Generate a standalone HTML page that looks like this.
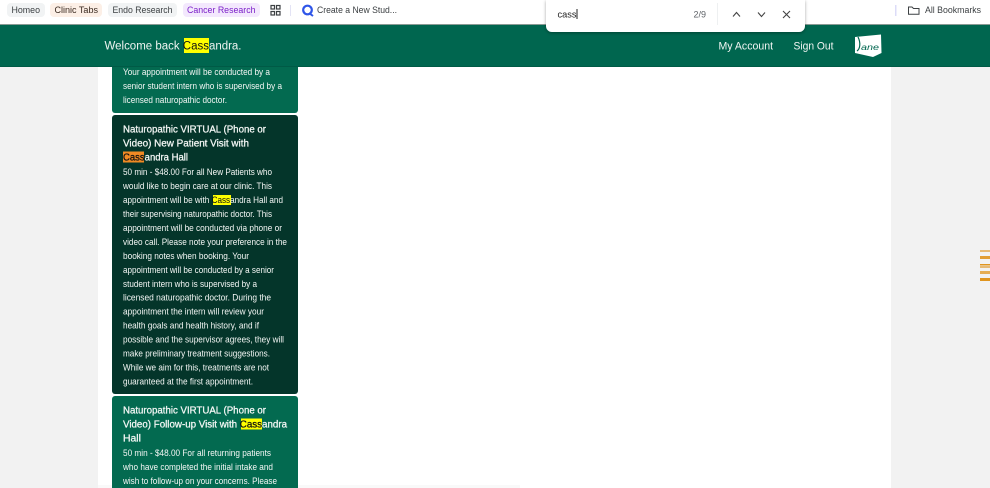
<!DOCTYPE html>
<html><head><meta charset="utf-8"><style>
html,body{margin:0;padding:0;width:990px;height:488px;overflow:hidden;background:#f2f2f2}
svg{display:block;font-family:"Liberation Sans",sans-serif}
.b text{font-size:9.2px;fill:#f4f7f5}
.t text{font-size:10.4px;fill:#f4f7f5;stroke:#f4f7f5;stroke-width:.28px}
.t tspan.k{fill:#111;stroke:#111}
.c text{font-size:9px;fill:#3c4043}
</style></head><body>
<svg width="990" height="488" viewBox="0 0 990 488" xmlns="http://www.w3.org/2000/svg">
<rect width="990" height="488" fill="#f2f2f2"/>
<rect x="98" y="67" width="793" height="421" fill="#fff"/>
<rect x="0" y="0" width="990" height="25" fill="#fff"/>
<rect x="0" y="24" width="990" height="1" fill="#8a9a94"/>
<rect x="0" y="25" width="990" height="42" fill="#00664f"/>
<rect x="0" y="66" width="990" height="1" fill="#005a46"/>

<!-- bookmarks -->
<rect x="7" y="3" width="38" height="14" rx="4" fill="#f1f3f4"/>
<rect x="50" y="3" width="52" height="14" rx="4" fill="#fcefe6"/>
<rect x="108" y="3" width="69" height="14" rx="4" fill="#f1f3f4"/>
<rect x="183" y="3" width="77" height="14" rx="4" fill="#f3e8fd"/>
<g class="c">
<text x="11.500" y="13" textLength="28.500" lengthAdjust="spacingAndGlyphs">Homeo</text>
<text x="54.500" y="13" textLength="43.500" lengthAdjust="spacingAndGlyphs" style="fill:#3a2a20">Clinic Tabs</text>
<text x="112.500" y="13" textLength="60" lengthAdjust="spacingAndGlyphs">Endo Research</text>
<text x="187" y="13" textLength="68.500" lengthAdjust="spacingAndGlyphs" style="fill:#7b1fc8">Cancer Research</text>
<text x="317" y="13" textLength="80" lengthAdjust="spacingAndGlyphs">Create a New Stud...</text>
<text x="925" y="13" textLength="56" lengthAdjust="spacingAndGlyphs">All Bookmarks</text>
</g>
<g fill="none" stroke="#3c4043" stroke-width="1.200">
<rect x="271" y="5.500" width="3.500" height="3.500"/><rect x="276.500" y="5.500" width="3.500" height="3.500"/>
<rect x="271" y="11.500" width="3.500" height="3.500"/><rect x="276.500" y="11.500" width="3.500" height="3.500"/>
</g>
<rect x="290" y="5" width="1" height="11" fill="#e3e3f5"/>
<circle cx="307.500" cy="10" r="4.300" fill="none" stroke="#2f56e8" stroke-width="2.200"/>
<path d="M309 13 L313 16" stroke="#2f56e8" stroke-width="2"/>
<rect x="895" y="5" width="1.500" height="11" fill="#dcdcf8"/>
<path d="M908.500 7 h3.500 l1.500 1.500 h5.500 v5.800 h-10.500 z" fill="none" stroke="#3c4043" stroke-width="1"/>

<!-- header -->
<rect x="184" y="38" width="25" height="15" fill="#ffff00"/>
<text x="104.500" y="49.500" font-size="11.500" fill="#eef4f1" textLength="137" lengthAdjust="spacingAndGlyphs">Welcome back <tspan fill="#111">Cass</tspan>andra.</text>
<text x="718.500" y="49.500" font-size="10.800" fill="#f2f6f4" textLength="54.500" lengthAdjust="spacingAndGlyphs">My Account</text>
<text x="793.500" y="49.500" font-size="10.800" fill="#f2f6f4" textLength="40" lengthAdjust="spacingAndGlyphs">Sign Out</text>
<path d="M855 37 L881 34.500 L881.500 53 L873 57 L855 53 Z" fill="#fff"/>
<path d="M858 37 C861 43 860 49 857 51" fill="none" stroke="#00664f" stroke-width="1.200"/>
<text x="861" y="50" font-size="8" font-style="italic" fill="#00664f" textLength="18" lengthAdjust="spacingAndGlyphs">ane</text>

<!-- card 0 -->
<path d="M112 67 H298 V110 a3 3 0 0 1 -3 3 H115 a3 3 0 0 1 -3 -3 Z" fill="#036a50"/>
<g class="b">
<text x="123" y="75" textLength="147" lengthAdjust="spacingAndGlyphs">Your appointment will be conducted by a</text>
<text x="123" y="89" textLength="159" lengthAdjust="spacingAndGlyphs">senior student intern who is supervised by a</text>
<text x="123" y="103" textLength="104" lengthAdjust="spacingAndGlyphs">licensed naturopathic doctor.</text>
</g>

<!-- card 1 dark -->
<rect x="112" y="115" width="186" height="279" rx="3" fill="#04352a"/>
<rect x="123" y="151.500" width="21" height="11" fill="#f08a24"/>
<rect x="213" y="195" width="18" height="10" fill="#ffff00"/>
<g class="t">
<text x="123" y="132.500" textLength="143" lengthAdjust="spacingAndGlyphs">Naturopathic VIRTUAL (Phone or</text>
<text x="123" y="146.500" textLength="126" lengthAdjust="spacingAndGlyphs">Video) New Patient Visit with</text>
<text x="123" y="160.500" textLength="65" lengthAdjust="spacingAndGlyphs"><tspan class="k">Cass</tspan>andra Hall</text>
</g>
<g class="b">
<text x="123" y="175" textLength="149" lengthAdjust="spacingAndGlyphs">50 min - $48.00 For all New Patients who</text>
<text x="123" y="189" textLength="149" lengthAdjust="spacingAndGlyphs">would like to begin care at our clinic. This</text>
<text x="123" y="203" textLength="160" lengthAdjust="spacingAndGlyphs">appointment will be with <tspan style="fill:#111">Cass</tspan>andra Hall and</text>
<text x="123" y="217" textLength="149" lengthAdjust="spacingAndGlyphs">their supervising naturopathic doctor. This</text>
<text x="123" y="231" textLength="159" lengthAdjust="spacingAndGlyphs">appointment will be conducted via phone or</text>
<text x="123" y="245" textLength="164" lengthAdjust="spacingAndGlyphs">video call. Please note your preference in the</text>
<text x="123" y="259" textLength="126" lengthAdjust="spacingAndGlyphs">booking notes when booking. Your</text>
<text x="123" y="273" textLength="151" lengthAdjust="spacingAndGlyphs">appointment will be conducted by a senior</text>
<text x="123" y="287" textLength="134" lengthAdjust="spacingAndGlyphs">student intern who is supervised by a</text>
<text x="123" y="300.500" textLength="148" lengthAdjust="spacingAndGlyphs">licensed naturopathic doctor. During the</text>
<text x="123" y="314.500" textLength="141" lengthAdjust="spacingAndGlyphs">appointment the intern will review your</text>
<text x="123" y="328.500" textLength="136" lengthAdjust="spacingAndGlyphs">health goals and health history, and if</text>
<text x="123" y="342.500" textLength="161" lengthAdjust="spacingAndGlyphs">possible and the supervisor agrees, they will</text>
<text x="123" y="356.500" textLength="147" lengthAdjust="spacingAndGlyphs">make preliminary treatment suggestions.</text>
<text x="123" y="370.500" textLength="146" lengthAdjust="spacingAndGlyphs">While we aim for this, treatments are not</text>
<text x="123" y="384.500" textLength="130" lengthAdjust="spacingAndGlyphs">guaranteed at the first appointment.</text>
</g>

<!-- card 2 -->
<path d="M112 488 V399 a3 3 0 0 1 3 -3 H295 a3 3 0 0 1 3 3 V488 Z" fill="#036a50"/>
<rect x="241" y="418.500" width="21" height="11" fill="#ffff00"/>
<g class="t">
<text x="123" y="413.500" textLength="143" lengthAdjust="spacingAndGlyphs">Naturopathic VIRTUAL (Phone or</text>
<text x="123" y="427.500" textLength="164" lengthAdjust="spacingAndGlyphs">Video) Follow-up Visit with <tspan class="k">Cass</tspan>andra</text>
<text x="123" y="441.500">Hall</text>
</g>
<g class="b">
<text x="123" y="456" textLength="148" lengthAdjust="spacingAndGlyphs">50 min - $48.00 For all returning patients</text>
<text x="123" y="470" textLength="150" lengthAdjust="spacingAndGlyphs">who have completed the initial intake and</text>
<text x="123" y="484" textLength="154" lengthAdjust="spacingAndGlyphs">wish to follow-up on your concerns. Please</text>
</g>
<rect x="98" y="485" width="14" height="3" fill="#f9f9f9"/>
<rect x="298" y="485" width="222" height="3" fill="#f9f9f9"/>

<!-- find bar -->
<defs><filter id="s" x="-10%" y="-30%" width="120%" height="170%"><feDropShadow dx="0" dy="1" stdDeviation="1.500" flood-color="#000" flood-opacity=".35"/></filter></defs>
<path d="M546 0 H805 V26 a6 6 0 0 1 -6 6 H552 a6 6 0 0 1 -6 -6 Z" fill="#fff" filter="url(#s)"/>
<text x="557.500" y="17.500" font-size="9" fill="#222" textLength="19" lengthAdjust="spacingAndGlyphs">cass</text>
<rect x="576.500" y="9" width="1" height="10" fill="#222"/>
<text x="693.500" y="17.500" font-size="9" fill="#5f6368" textLength="12.500" lengthAdjust="spacingAndGlyphs">2/9</text>
<rect x="717" y="3" width="1" height="22" fill="#eef0f1"/>
<g fill="none" stroke="#444" stroke-width="1.100">
<path d="M733 16.500 L736.500 12.500 L740 16.500"/>
<path d="M758 12.500 L761.500 16.500 L765 12.500"/>
<path d="M783 11 L790 18 M790 11 L783 18"/>
</g>

<!-- scrollbar marks -->
<g fill="#e0951f">
<rect x="980" y="250" width="10" height="2" opacity=".6"/>
<rect x="980" y="256" width="10" height="3" opacity=".9"/>
<rect x="980" y="264" width="10" height="1.500"/>
<rect x="980" y="266" width="10" height="2" opacity=".6"/>
<rect x="980" y="271" width="10" height="3" opacity=".75"/>
<rect x="980" y="278" width="10" height="3"/>
</g>
</svg>
</body></html>
